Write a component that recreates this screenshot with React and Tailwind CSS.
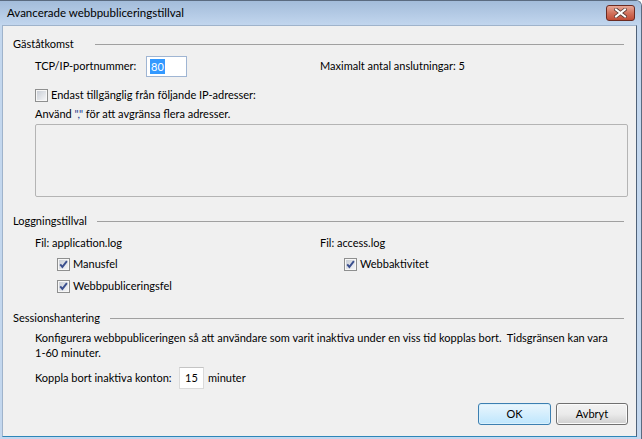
import React from "react";

function CheckBox({ checked }) {
  return (
    <svg width="13" height="13" viewBox="0 0 13 13" className="shrink-0">
      <defs>
        <linearGradient id="cbFill" x1="0" y1="0" x2="1" y2="1">
          <stop offset="0" stopColor="#c9ced6" />
          <stop offset="1" stopColor="#f4f5f7" />
        </linearGradient>
      </defs>
      <rect x="0.5" y="0.5" width="12" height="12" fill="#f7f7f7" stroke="#8e8f8f" />
      <rect x="2" y="2" width="9" height="9" fill="url(#cbFill)" />
      {checked && (
        <path d="M3.2 6.3 L5.4 8.9 L9.9 3.2" fill="none" stroke="#3a4f8e" strokeWidth="1.9" />
      )}
    </svg>
  );
}

function GroupHeader({ children }) {
  return (
    <div className="flex items-center h-4 pl-[10px] pr-[12px]">
      <span className="min-w-[72px] whitespace-nowrap">{children}</span>
      <div className="ml-[10px] flex-1 h-px bg-[#a0a0a0]" />
    </div>
  );
}

export default function App() {
  return (
    <div className="w-[642px] h-[439px] flex flex-col bg-[#c3d7ee] border-t border-r border-[#5b6b80] rounded-tr-[6px] text-[11px] text-black font-['Lato',sans-serif] overflow-hidden">
      {/* title bar */}
      <div className="h-6 shrink-0 flex items-center pl-[7px] pr-[6px] bg-gradient-to-b from-[#a3bcda] to-[#c2d6ee]">
        <span className="flex-1 whitespace-nowrap text-[11.5px]">Avancerade webbpubliceringstillval</span>
        <button className="w-[29px] h-[16px] rounded-[3px] border border-[#6b2b22] bg-gradient-to-b from-[#e7a797] via-[#d2735e] to-[#c04b36] flex items-center justify-center">
          <svg width="13" height="10" viewBox="0 0 13 10">
            <path d="M2 1.5 L11 8.5 M11 1.5 L2 8.5" stroke="#5a3b36" strokeWidth="3.6" strokeLinecap="square" />
            <path d="M2 1.5 L11 8.5 M11 1.5 L2 8.5" stroke="#ffffff" strokeWidth="2" strokeLinecap="square" />
          </svg>
        </button>
      </div>

      {/* body */}
      <div className="flex-1 flex flex-col ml-[2px] mr-[4px] mb-[2px] bg-[#f0f0f0] border border-l-[#9fb3cb] border-r-[#4f6178] border-t-[#9fb3cb] border-b-[#2e86b9]">
        <div className="mt-[10px]">
          <GroupHeader>Gäståtkomst</GroupHeader>
        </div>

        <div className="mt-[4px] h-[21px] grid grid-cols-[285px_1fr] pl-[32px] pr-[8px]">
          <div className="flex items-center">
            <span className="w-[111px] whitespace-nowrap">TCP/IP-portnummer:</span>
            <div className="w-[41px] h-[21px] bg-white border border-[#9fb5d3] flex items-center pl-[3px]">
              <span className="bg-[#3399ff] text-white leading-[15px] px-px">80</span>
            </div>
          </div>
          <div className="flex items-center whitespace-nowrap">Maximalt antal anslutningar: 5</div>
        </div>

        <div className="mt-[10px] h-4 flex items-center gap-[3px] pl-[32px]">
          <CheckBox checked={false} />
          <span className="whitespace-nowrap">Endast tillgänglig från följande IP-adresser:</span>
        </div>

        <div className="mt-[3px] h-4 flex items-center pl-[32px] whitespace-nowrap">
          Använd&nbsp;<span className="text-[#24378a]">","</span>&nbsp;för att avgränsa flera adresser.
        </div>

        <div className="mt-[2px] ml-[32px] mr-[8px] h-[73px] border border-[#b4b4b4] rounded-[2px] bg-[#f0f0f0]" />

        <div className="mt-[16px]">
          <GroupHeader>Loggningstillval</GroupHeader>
        </div>

        <div className="mt-[6px] grid grid-cols-[285px_1fr] pl-[32px] pr-[8px]">
          <div className="flex flex-col">
            <div className="h-4 flex items-center">Fil: application.log</div>
            <div className="mt-[5px] h-4 flex items-center gap-[3px] pl-[22px]">
              <CheckBox checked />
              <span>Manusfel</span>
            </div>
            <div className="mt-[6px] h-4 flex items-center gap-[3px] pl-[22px]">
              <CheckBox checked />
              <span>Webbpubliceringsfel</span>
            </div>
          </div>
          <div className="flex flex-col">
            <div className="h-4 flex items-center">Fil: access.log</div>
            <div className="mt-[5px] h-4 flex items-center gap-[3px] pl-[24px]">
              <CheckBox checked />
              <span>Webbaktivitet</span>
            </div>
          </div>
        </div>

        <div className="mt-[16px]">
          <GroupHeader>Sessionshantering</GroupHeader>
        </div>

        <p className="mt-[4px] pl-[32px] pr-[14px] leading-[15px]">
          Konfigurera webbpubliceringen så att användare som varit inaktiva under en viss tid kopplas bort.&nbsp; Tidsgränsen kan vara
          <br />
          1-60 minuter.
        </p>

        <div className="mt-[7px] h-[22px] flex items-center pl-[32px]">
          <span className="w-[144px] whitespace-nowrap">Koppla bort inaktiva konton:</span>
          <div className="w-[25px] h-[22px] bg-white border border-[#dadada] border-t-[#c4c4c4] flex items-center justify-center">15</div>
          <span className="ml-[4px]">minuter</span>
        </div>

        <div className="mt-[14px] flex justify-end gap-[5px] pr-[8px]">
          <button className="w-[73px] h-[22px] rounded-[3px] border border-[#3c7fb1] bg-gradient-to-b from-[#eaf6fd] to-[#bee6fd] shadow-[inset_0_0_0_1px_#d9f0fc]">
            OK
          </button>
          <button className="w-[72px] h-[22px] rounded-[3px] border border-[#707070] bg-gradient-to-b from-[#f2f2f2] via-[#ebebeb] to-[#cfcfcf] shadow-[inset_0_0_0_1px_#fbfbfb]">
            Avbryt
          </button>
        </div>
      </div>
    </div>
  );
}
